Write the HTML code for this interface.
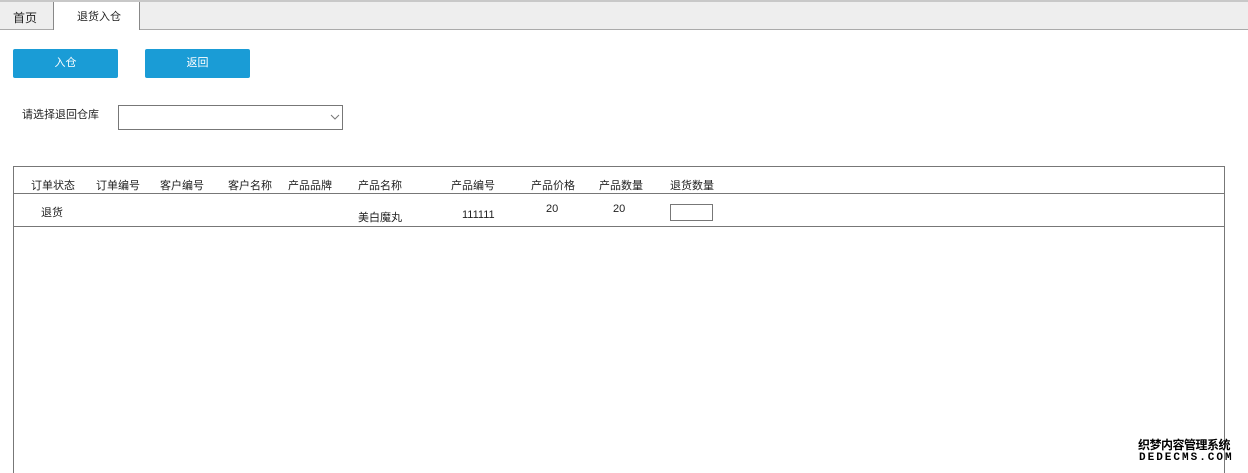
<!DOCTYPE html>
<html><head><meta charset="utf-8"><style>
*{margin:0;padding:0;box-sizing:border-box}
html,body{width:1248px;height:473px;overflow:hidden}
body{background:#fff;font-family:"Liberation Sans","Noto Sans CJK SC",sans-serif;font-size:11px;color:#222;position:relative}
.a{position:absolute}
.tabbar{left:0;top:0;width:1248px;height:30px;background:#eeeeee;border-top:2px solid #c8c8c8;border-bottom:1px solid #aaa}
.btn{background:#1a9cd6;color:#fff;border-radius:2px;text-align:center;line-height:29px;font-size:11px}
.t{font-size:11px;white-space:nowrap}
</style></head><body>
<div class="a tabbar"></div>
<div class="a t" style="left:13px;top:9px;font-size:12px">首页</div>
<div class="a" style="left:53px;top:2px;width:87px;height:28px;background:#fff;border-left:1px solid #888;border-right:1px solid #888"></div>
<div class="a t" style="left:77px;top:8px">退货入仓</div>
<div class="a btn" style="left:13px;top:49px;width:105px;height:29px">入仓</div>
<div class="a btn" style="left:145px;top:49px;width:105px;height:29px">返回</div>
<div class="a t" style="left:22px;top:106px">请选择退回仓库</div>
<div class="a" style="left:118px;top:105px;width:225px;height:25px;border:1px solid #777"></div>
<svg class="a" style="left:330px;top:114px" width="10" height="7"><path d="M1 1L5 5L9 1" stroke="#777" fill="none"/></svg>
<div class="a" style="left:13px;top:166px;width:1212px;height:307px;border:1px solid #777;border-bottom:none"></div>
<div class="a" style="left:13px;top:193px;width:1212px;height:1px;background:#777"></div>
<div class="a" style="left:13px;top:226px;width:1212px;height:1px;background:#777"></div>
<div class="a t" style="left:31px;top:177px">订单状态</div>
<div class="a t" style="left:96px;top:177px">订单编号</div>
<div class="a t" style="left:160px;top:177px">客户编号</div>
<div class="a t" style="left:228px;top:177px">客户名称</div>
<div class="a t" style="left:288px;top:177px">产品品牌</div>
<div class="a t" style="left:358px;top:177px">产品名称</div>
<div class="a t" style="left:451px;top:177px">产品编号</div>
<div class="a t" style="left:531px;top:177px">产品价格</div>
<div class="a t" style="left:599px;top:177px">产品数量</div>
<div class="a t" style="left:670px;top:177px">退货数量</div>
<div class="a t" style="left:41px;top:204px">退货</div>
<div class="a t" style="left:358px;top:209px">美白魔丸</div>
<div class="a t" style="left:462px;top:209px">111111</div>
<div class="a t" style="left:546px;top:203px">20</div>
<div class="a t" style="left:613px;top:203px">20</div>
<div class="a" style="left:670px;top:204px;width:43px;height:17px;border:1px solid #777"></div>
<div class="a" style="left:1138px;top:436px;font-size:12px;font-weight:bold;color:#000;letter-spacing:-0.5px">织梦内容管理系统</div>
<div class="a" style="left:1139px;top:452px;font-size:11px;font-weight:bold;color:#000;letter-spacing:2px;font-family:'Liberation Mono',monospace">DEDECMS.COM</div>
</body></html>
